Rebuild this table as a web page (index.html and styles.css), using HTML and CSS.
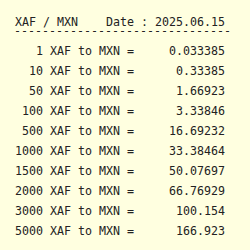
FILE: index.html
```html
<!DOCTYPE html>
<html lang="en">
<head>
    <meta charset="UTF-8">
    <meta name="viewport" content="width=device-width, initial-scale=1.0">
    <title>XAF / MXN</title>
    <link rel="stylesheet" href="styles.css">
</head>
<body>
    <div class="board">
        <div class="head">XAF / MXN    Date : 2025.06.15</div>
        <div class="rule">-------------------------------</div>

        <div class="rows">
            <div class="row"><span class="amt">1</span><span class="pair"> XAF to MXN =</span><span class="val">0.033385</span></div>
            <div class="row"><span class="amt">10</span><span class="pair"> XAF to MXN =</span><span class="val">0.33385</span></div>
            <div class="row"><span class="amt">50</span><span class="pair"> XAF to MXN =</span><span class="val">1.66923</span></div>
            <div class="row"><span class="amt">100</span><span class="pair"> XAF to MXN =</span><span class="val">3.33846</span></div>
            <div class="row"><span class="amt">500</span><span class="pair"> XAF to MXN =</span><span class="val">16.69232</span></div>
            <div class="row"><span class="amt">1000</span><span class="pair"> XAF to MXN =</span><span class="val">33.38464</span></div>
            <div class="row"><span class="amt">1500</span><span class="pair"> XAF to MXN =</span><span class="val">50.07697</span></div>
            <div class="row"><span class="amt">2000</span><span class="pair"> XAF to MXN =</span><span class="val">66.76929</span></div>
            <div class="row"><span class="amt">3000</span><span class="pair"> XAF to MXN =</span><span class="val">100.154</span></div>
            <div class="row"><span class="amt">5000</span><span class="pair"> XAF to MXN =</span><span class="val">166.923</span></div>
        </div>
    </div>
</body>
</html>
```

FILE: styles.css
```css
* {
    margin: 0;
    padding: 0;
    box-sizing: border-box;
}

body {
    background-color: #ffffe0;
    color: #222;
    font-family: 'DejaVu Sans Mono', monospace;
    font-size: 11.63px;
}

.board {
    padding: 15px 0 0 15px;
}

.head {
    white-space: pre;
    line-height: 14px;
}

.rule {
    white-space: pre;
    line-height: 4px;
    height: 4px;
    margin-left: -1px;
}

.rows {
    margin-top: 8px;
}

.row {
    display: flex;
    line-height: 20px;
    white-space: pre;
}

.amt {
    width: 4ch;
    text-align: right;
}

.val {
    width: 13ch;
    text-align: right;
}
```
